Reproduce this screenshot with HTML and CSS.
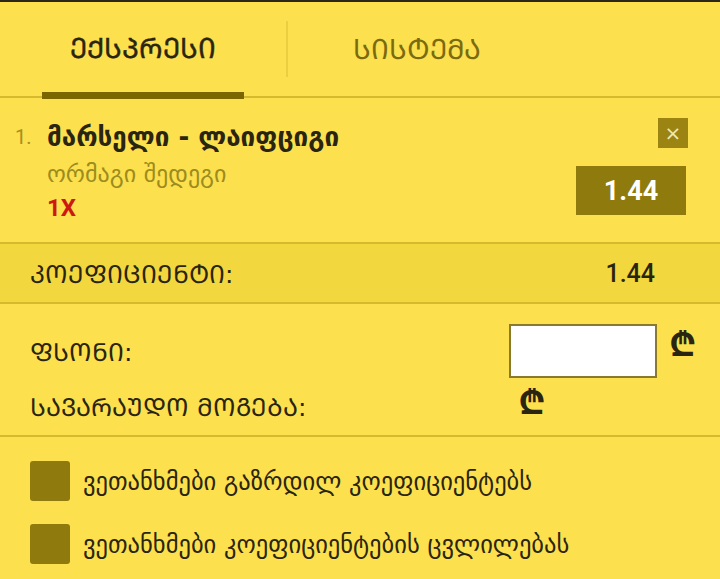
FILE: index.html
```html
<!DOCTYPE html>
<html lang="ka">
<head>
<meta charset="utf-8">
<link rel="stylesheet" href="styles.css">
</head>
<body>
<div class="topbar"></div>
<div class="tabs">
  <div class="tab active">ᲔᲥᲡᲞᲠᲔᲡᲘ</div>
  <div class="sep"></div>
  <div class="tab">ᲡᲘᲡᲢᲔᲛᲐ</div>
</div>
<div class="event">
  <div class="num">1.</div>
  <div class="info">
    <div class="title">მარსელი - ლაიფციგი</div>
    <div class="market">ორმაგი შედეგი</div>
    <div class="pick">1X</div>
  </div>
  <div class="side">
    <div class="close">×</div>
    <div class="odds">1.44</div>
  </div>
</div>
<div class="coef">
  <span class="label">ᲙᲝᲔᲤᲘᲪᲘᲔᲜᲢᲘ:</span>
  <span class="coef-val">1.44</span>
</div>
<div class="stake">
  <div class="stake-row">
    <span class="label">ᲤᲡᲝᲜᲘ:</span>
    <div class="input-wrap"><div class="input"></div><span class="lari">₾</span></div>
  </div>
  <div class="win-row">
    <span class="label">ᲡᲐᲕᲐᲠᲐᲣᲓᲝ ᲛᲝᲒᲔᲑᲐ:</span>
    <span class="lari win-lari">₾</span>
  </div>
</div>
<div class="checks">
  <label class="check"><span class="box"></span><span>ვეთანხმები გაზრდილ კოეფიციენტებს</span></label>
  <label class="check"><span class="box"></span><span>ვეთანხმები კოეფიციენტების ცვლილებას</span></label>
</div>
</body>
</html>
```
FILE: styles.css
```css
* { box-sizing: border-box; }
body {
  margin: 0;
  background: #fce04e;
  font-family: "DejaVu Sans", "Noto Sans", sans-serif;
  color: #2a2510;
  width: 720px;
  height: 579px;
  overflow: hidden;
}
.topbar { height: 2px; background: #2a2618; }
.tabs {
  display: flex;
  align-items: center;
  height: 96px;
  border-bottom: 2px solid #d6b92c;
  padding-left: 42px;
}
.tab {
  height: 96px;
  display: flex;
  align-items: center;
  justify-content: center;
  font-size: 28px;
  color: #7a6a10;
  padding-bottom: 2px;
}
.tab.active {
  width: 202px;
  color: #2a2510;
  border-bottom: 7px solid #7a6500;
  margin-bottom: -2px;
  height: 98px;
  padding-bottom: 0;
  -webkit-text-stroke: 0.4px #2a2510;
}
.sep {
  width: 2px;
  height: 56px;
  margin-left: 42px;
  background: #eccf40;
}
.tab:last-child { width: 258px; }
.event {
  display: flex;
  height: 146px;
  padding: 21px 32px 0 15px;
  border-bottom: 2px solid #d6b92c;
}
.num { width: 32px; font-size: 20px; color: #a69020; padding-top: 6px; font-family: "Roboto", sans-serif; }
.info { flex: 1; }
.title { font-size: 26px; font-weight: bold; line-height: 36px; }
.market { font-size: 24px; color: #9c8c1e; line-height: 30px; margin-top: 4px; }
.pick { font-family: "Roboto", sans-serif; font-weight: bold; font-size: 24px; color: #cc1a10; line-height: 30px; margin-top: 4px; }
.side { display: flex; flex-direction: column; align-items: flex-end; margin-top: -1px; }
.close {
  width: 30px; height: 30px;
  background: #9c8412;
  color: #f3e7b0;
  font-family: "DejaVu Sans", sans-serif;
  font-size: 20px;
  display: flex; align-items: center; justify-content: center;
}
.odds {
  margin-top: 18px;
  margin-right: 2px;
  width: 110px; height: 49px;
  background: #8f7a0d;
  color: #fff;
  font-family: "Roboto", sans-serif;
  font-weight: bold;
  font-size: 27px;
  display: flex; align-items: center; justify-content: center;
}
.coef {
  display: flex;
  justify-content: space-between;
  align-items: center;
  height: 60px;
  padding: 0 65px 0 30px;
  background: #f3d73f;
  border-bottom: 2px solid #d6b92c;
}
.label { font-size: 25px; }
.coef-val { font-family: "Roboto", sans-serif; font-size: 25px; font-weight: 500; }
.stake {
  padding: 20px 0 0 30px;
  height: 133px;
  border-bottom: 2px solid #d6b92c;
}
.stake-row { display: flex; justify-content: space-between; align-items: center; height: 54px; }
.input-wrap { display: flex; align-items: flex-start; padding-right: 24px; }
.input { width: 148px; height: 54px; background: #fff; border: 2px solid #8a7a30; }
.lari { font-size: 34px; font-weight: bold; margin-left: 12px; line-height: 40px; }
.win-row { display: flex; align-items: center; height: 56px; }
.win-lari { margin-left: 212px; margin-top: -8px; }
.checks { padding: 24px 0 0 30px; display: flex; flex-direction: column; gap: 23px; }
.check { display: flex; align-items: center; gap: 13px; font-size: 24.5px; }
.box { width: 40px; height: 40px; background: #8f7a0d; border-radius: 3px; }
```
